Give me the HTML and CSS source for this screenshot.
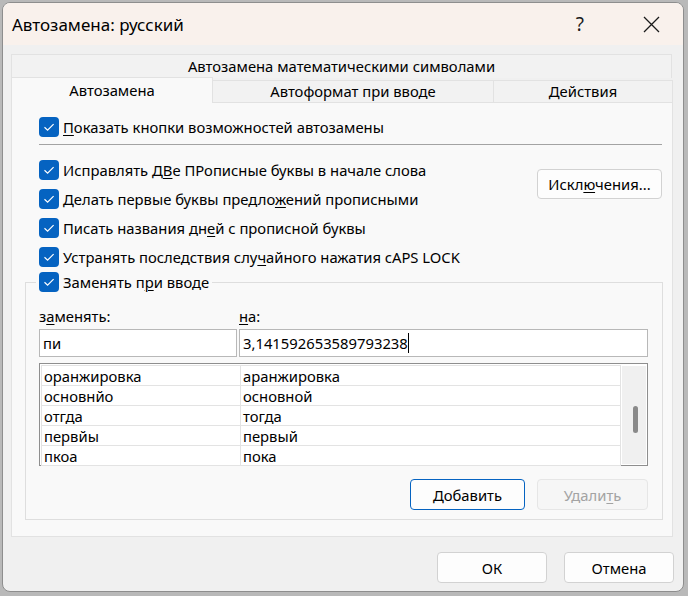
FILE: index.html
```html
<!DOCTYPE html>
<html lang="ru">
<head>
<meta charset="UTF-8">
<title>Автозамена: русский</title>
<link rel="stylesheet" href="styles.css">
</head>
<body>
<div class="dialog">
    <div class="titlebar">
        <span class="title">Автозамена: русский</span>
        <span class="help">?</span>
        <svg class="close" width="17" height="17" viewBox="0 0 17 17">
            <path d="M1 1 L16 16 M16 1 L1 16" stroke="#1a1a1a" stroke-width="1.3" fill="none"/>
        </svg>
    </div>

    <div class="content">
        <div class="tabs">
            <div class="tab-row">
                <div class="tab wide">Автозамена математическими символами</div>
            </div>
            <div class="tab-row">
                <div class="tab active">Автозамена</div>
                <div class="tab second">Автоформат при вводе</div>
                <div class="tab third">Действия</div>
            </div>
        </div>

        <div class="panel">
            <label class="check">
                <span class="box"><svg width="20" height="20" viewBox="0 0 20 20"><path d="M5.5 10.2 L8.6 13.2 L14.6 7.2" stroke="#fff" stroke-width="1.2" fill="none"/></svg></span>
                <span><u>П</u>оказать кнопки возможностей автозамены</span>
            </label>
            <div class="sep"></div>

            <div class="options">
                <div class="option-list">
                    <label class="check">
                        <span class="box"><svg width="20" height="20" viewBox="0 0 20 20"><path d="M5.5 10.2 L8.6 13.2 L14.6 7.2" stroke="#fff" stroke-width="1.2" fill="none"/></svg></span>
                        <span>Исправлять Д<u>В</u>е ПРописные буквы в начале слова</span>
                    </label>
                    <label class="check">
                        <span class="box"><svg width="20" height="20" viewBox="0 0 20 20"><path d="M5.5 10.2 L8.6 13.2 L14.6 7.2" stroke="#fff" stroke-width="1.2" fill="none"/></svg></span>
                        <span>Делать первые буквы предло<u>ж</u>ений прописными</span>
                    </label>
                    <label class="check">
                        <span class="box"><svg width="20" height="20" viewBox="0 0 20 20"><path d="M5.5 10.2 L8.6 13.2 L14.6 7.2" stroke="#fff" stroke-width="1.2" fill="none"/></svg></span>
                        <span>Писать названия дн<u>е</u>й с прописной буквы</span>
                    </label>
                    <label class="check">
                        <span class="box"><svg width="20" height="20" viewBox="0 0 20 20"><path d="M5.5 10.2 L8.6 13.2 L14.6 7.2" stroke="#fff" stroke-width="1.2" fill="none"/></svg></span>
                        <span>Устранять последствия слу<u>ч</u>айного нажатия cAPS LOCK</span>
                    </label>
                </div>
                <button class="btn exceptions">Искл<u>ю</u>чения...</button>
            </div>

            <fieldset class="group">
                <legend>
                    <label class="check">
                        <span class="box"><svg width="20" height="20" viewBox="0 0 20 20"><path d="M5.5 10.2 L8.6 13.2 L14.6 7.2" stroke="#fff" stroke-width="1.2" fill="none"/></svg></span>
                        <span>Заменять п<u>р</u>и вводе</span>
                    </label>
                </legend>

                <div class="fields">
                    <span>з<u>а</u>менять:</span>
                    <span><u>н</u>а:</span>
                    <div class="input">пи</div>
                    <div class="input">3,141592653589793238<span class="caret"></span></div>
                </div>

                <div class="list">
                    <table>
                        <tr><td>оранжировка</td><td>аранжировка</td></tr>
                        <tr><td>основнйо</td><td>основной</td></tr>
                        <tr><td>отгда</td><td>тогда</td></tr>
                        <tr><td>первйы</td><td>первый</td></tr>
                        <tr><td>пкоа</td><td>пока</td></tr>
                    </table>
                    <div class="scrollbar"><div class="thumb"></div></div>
                </div>

                <div class="group-buttons">
                    <button class="btn default">Добавить</button>
                    <button class="btn" disabled>Удали<u>т</u>ь</button>
                </div>
            </fieldset>
        </div>

        <div class="footer">
            <button class="btn">ОК</button>
            <button class="btn">Отмена</button>
        </div>
    </div>
</div>
</body>
</html>
```

FILE: styles.css
```css
* {
    box-sizing: border-box;
}

html, body {
    margin: 0;
}

body {
    background-color: #b9b9b9;
    font-family: "Noto Sans", "Open Sans", sans-serif;
    font-size: 14.8px;
    color: #000;
    padding: 2px 4px 4px 2px;
}

u {
    text-decoration-thickness: 1px;
    text-underline-offset: 2px;
}

.dialog {
    width: 682px;
    height: 590px;
    background-color: #f0f0f0;
    border: 1px solid #8e8e8e;
    border-radius: 8px;
    overflow: hidden;
}

.titlebar {
    height: 42px;
    background-color: #f9f1ec;
    display: flex;
    align-items: center;
    padding: 0 23px 0 9px;
}

.title {
    flex: 1;
    font-size: 17px;
}

.help {
    font-size: 19px;
    margin-right: 59px;
    color: #1a1a1a;
}

.content {
    padding: 9px 10px 0 8px;
}

/* tabs */
.tab-row {
    display: flex;
    height: 24px;
}

.tab-row + .tab-row {
    height: 25px;
}

.tab {
    background-color: #f2f2f2;
    border: 1px solid #e2e2e2;
    border-bottom: none;
    display: flex;
    align-items: center;
    justify-content: center;
    line-height: 1;
}

.tab.wide {
    flex: 1;
    margin-right: 1px;
}

.tab.active {
    width: 202px;
    background-color: #f9f9f9;
    margin-top: -1px;
    height: 26px;
}

.tab.second,
.tab.third {
    margin-top: 2px;
    border-bottom: 1px solid #e2e2e2;
}

.tab.second {
    width: 281px;
    border-left: none;
}

.tab.third {
    width: 179px;
    border-left: none;
}

/* panel */
.panel {
    height: 434px;
    background-color: #f9f9f9;
    border: 1px solid #e2e2e2;
    border-top: none;
    padding: 14px 10px 0 27px;
}

.check {
    display: flex;
    align-items: center;
    gap: 4px;
    height: 20px;
    white-space: nowrap;
}

.box {
    width: 20px;
    height: 20px;
    border-radius: 4px;
    background-color: #0563c1;
    display: flex;
    flex: none;
}

.sep {
    height: 1px;
    background-color: #a3a3a3;
    margin: 7px 0 15px;
}

.options {
    display: flex;
    justify-content: space-between;
    align-items: flex-start;
}

.option-list {
    display: flex;
    flex-direction: column;
    gap: 9px;
}

.btn {
    font-family: inherit;
    font-size: 14.8px;
    color: #000;
    background-color: #fdfdfd;
    border: 1px solid #d2d2d2;
    border-radius: 4px;
    padding: 0;
    height: 31px;
}

.btn.exceptions {
    width: 125px;
    height: 30px;
    margin-top: 9px;
}

.btn.default {
    width: 115px;
    border-color: #0563c1;
}

.btn[disabled] {
    width: 111px;
    color: #a3a3a3;
    background-color: #f6f6f6;
    border-color: #e6e6e6;
}

/* replace group */
.group {
    margin: 5px -1px 0 -14px;
    padding: 0 14px 9px 13px;
    border: 1px solid #dedede;
}

.group legend {
    padding: 0 3px;
    margin-left: -3px;
}

.fields {
    display: grid;
    grid-template-columns: 198px 1fr;
    column-gap: 2px;
    row-gap: 3px;
    margin-top: 14px;
}

.fields span {
    height: 20px;
}

.input {
    height: 28px;
    background-color: #fff;
    border: 1px solid #b8b8b8;
    padding-left: 3px;
    display: flex;
    align-items: center;
}

.caret {
    width: 1px;
    height: 22px;
    background-color: #000;
}

.list {
    margin-top: 6px;
    height: 103px;
    border: 1px solid #8e8e8e;
    background-color: #fff;
    display: flex;
    padding: 1px;
}

.list table {
    border-collapse: collapse;
    width: 580px;
}

.list td {
    height: 20px;
    padding: 1px 0 0 2px;
    border: 1px solid #e3e3e3;
    line-height: 18px;
}

.list td:first-child {
    width: 199px;
}

.scrollbar {
    flex: 1;
    margin: 1px 0 0 1px;
    background-color: #f0f0f0;
    position: relative;
}

.thumb {
    position: absolute;
    left: 11px;
    top: 40px;
    width: 5px;
    height: 27px;
    border-radius: 3px;
    background-color: #8a8a8a;
}

.group-buttons {
    display: flex;
    justify-content: flex-end;
    gap: 12px;
    margin-top: 13px;
}

/* footer */
.footer {
    display: flex;
    justify-content: flex-end;
    gap: 17px;
    margin: 15px -1px 0 0;
}

.footer .btn {
    width: 110px;
}
```
